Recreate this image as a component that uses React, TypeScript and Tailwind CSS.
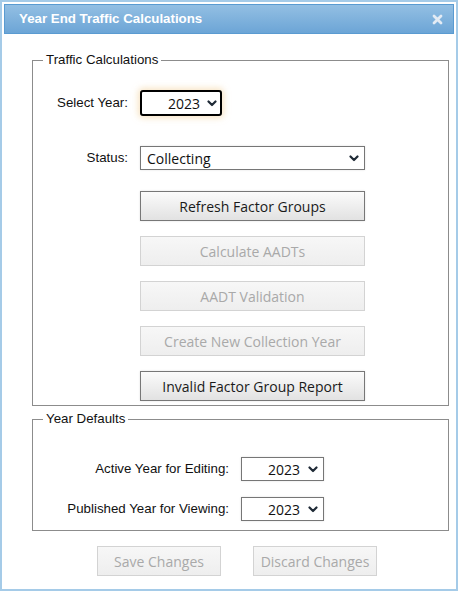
import React from "react";

const labelFont = { fontFamily: '"Liberation Sans", Arial, sans-serif' };
const ctrlFont = { fontFamily: '"Open Sans", "Noto Sans", sans-serif' };

const Chevron = () => (
  <svg width="10" height="7" viewBox="0 0 10 7" className="shrink-0">
    <polyline
      points="1.5,1.5 5,5 8.5,1.5"
      fill="none"
      stroke="#1f2a36"
      strokeWidth="2.2"
      strokeLinecap="round"
      strokeLinejoin="round"
    />
  </svg>
);

const YearSelect = ({ focused = false }: { focused?: boolean }) => (
  <div
    style={ctrlFont}
    className={
      focused
        ? "flex h-[26px] w-[82px] items-center justify-end gap-[7px] rounded-[3px] border-2 border-black bg-white pr-[3px] text-[14px] text-[#111] shadow-[0_0_6px_2px_rgba(240,205,150,0.55)]"
        : "flex h-[24px] w-[83px] items-center justify-end gap-[8px] border border-[#767676] bg-white pr-[5px] text-[14px] text-[#111] shadow-[0_0_2px_rgba(0,0,0,0.12)]"
    }
  >
    <span>2023</span>
    <Chevron />
  </div>
);

const Btn = ({ label, disabled = false, w = "w-[225px]" }: { label: string; disabled?: boolean; w?: string }) => (
  <button
    style={ctrlFont}
    disabled={disabled}
    className={
      disabled
        ? `${w} h-[30px] border border-[#d3d3d3] bg-gradient-to-b from-[#f7f7f7] to-[#eeeeee] text-[14px] text-[#a9a9a9]`
        : `${w} h-[30px] border border-[#777] bg-gradient-to-b from-[#fbfbfb] to-[#e2e2e2] text-[14px] text-[#1a1a1a] shadow-[0_0_2px_rgba(0,0,0,0.12)]`
    }
  >
    {label}
  </button>
);

export default function App() {
  return (
    <div className="h-[591px] w-[458px] overflow-hidden border-2 border-[#a5cbe8] bg-white" style={labelFont}>
      {/* title bar */}
      <div className="m-[2px] flex h-[30px] items-center justify-between border border-[#5a9bd1] bg-gradient-to-b from-[#93bfe3] to-[#6ca5d6] pl-[14px] pr-[10px]">
        <span className="text-[13.3px] font-bold text-white">Year End Traffic Calculations</span>
        <svg width="11" height="11" viewBox="0 0 11 11">
          <path d="M2 2 L9 9 M9 2 L2 9" stroke="#e3ebf4" strokeWidth="2.8" strokeLinecap="round" />
        </svg>
      </div>

      <fieldset className="ml-[30px] mt-[18px] w-[417px] border border-[#8c8c8c] pb-[4px]">
        <legend className="ml-[10px] px-[3px] text-[13.3px] leading-[16px] text-[#111]">Traffic Calculations</legend>

        <div className="mt-[22px] flex items-center">
          <span className="w-[95px] text-right text-[13.3px] text-[#111]">Select Year:</span>
          <div className="ml-[12px]">
            <YearSelect focused />
          </div>
        </div>

        <div className="mt-[30px] flex items-center">
          <span className="w-[95px] text-right text-[13.3px] text-[#111]">Status:</span>
          <div
            style={ctrlFont}
            className="ml-[12px] flex h-[24px] w-[225px] items-center justify-between border border-[#767676] bg-white pl-[6px] pr-[5px] text-[14px] text-[#111] shadow-[0_0_2px_rgba(0,0,0,0.12)]"
          >
            <span>Collecting</span>
            <Chevron />
          </div>
        </div>

        <div className="ml-[107px] mt-[21px] flex flex-col gap-[15px]">
          <Btn label="Refresh Factor Groups" />
          <Btn label="Calculate AADTs" disabled />
          <Btn label="AADT Validation" disabled />
          <Btn label="Create New Collection Year" disabled />
          <Btn label="Invalid Factor Group Report" />
        </div>
      </fieldset>

      <fieldset className="ml-[30px] mt-[5px] w-[417px] border border-[#8c8c8c] pb-[9px]">
        <legend className="ml-[10px] px-[3px] text-[13.3px] leading-[16px] text-[#111]">Year Defaults</legend>

        <div className="mt-[30px] flex items-center">
          <span className="w-[196px] text-right text-[13.3px] text-[#111]">Active Year for Editing:</span>
          <div className="ml-[12px]">
            <YearSelect />
          </div>
        </div>
        <div className="mt-[16px] flex items-center">
          <span className="w-[196px] text-right text-[13.3px] text-[#111]">Published Year for Viewing:</span>
          <div className="ml-[12px]">
            <YearSelect />
          </div>
        </div>
      </fieldset>

      <div className="ml-[95px] mt-[15px] flex gap-[32px]">
        <Btn label="Save Changes" disabled w="w-[124px]" />
        <Btn label="Discard Changes" disabled w="w-[124px]" />
      </div>
    </div>
  );
}
